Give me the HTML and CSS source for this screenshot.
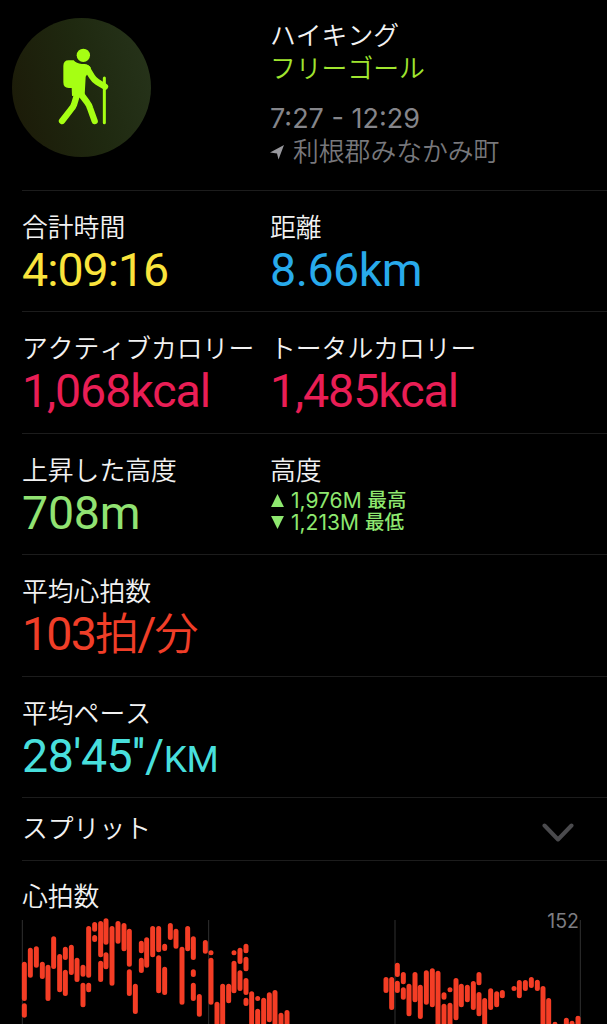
FILE: index.html
```html
<!DOCTYPE html>
<html lang="ja">
<head>
<meta charset="utf-8">
<title>ハイキング</title>
<link rel="stylesheet" href="styles.css">
</head>
<body>
<main class="workout">
  <header class="summary">
    <div class="badge">
      <svg class="hiker" viewBox="0 0 170 234" aria-hidden="true">
        <circle cx="82" cy="22" r="20"/>
        <path d="M38 37h15q8 10 24 11h8q13 1 20 12l-16 26-3 54-38 4-1-24H38q-16 0-16-17V54q0-17 16-17z"/>
        <path class="limb" d="M92 60L108 86Q114 96 124 102L147 116"/>
        <path class="limb" d="M66 130L54 170Q51 178 45 184L18 219M70 132L94 164Q99 170 102 180L116 219"/>
        <path class="pole" d="M145 90V224"/>
      </svg>
    </div>
    <div class="heading">
      <div class="title">ハイキング</div>
      <div class="goal">フリーゴール</div>
      <div class="time">7:27 - 12:29</div>
      <div class="place">
        <svg class="arrow" viewBox="0 0 14 16" aria-hidden="true"><path d="M14 1L8.5 15.5 7 9.5 0 8.5z"/></svg>
        <span>利根郡みなかみ町</span>
      </div>
    </div>
  </header>

  <section class="row">
    <div><div class="label">合計時間</div><div class="value duration yellow">4:09:16</div></div>
    <div><div class="label">距離</div><div class="value distance blue">8.66km</div></div>
  </section>
  <section class="row">
    <div><div class="label">アクティブカロリー</div><div class="value energy pink">1,068kcal</div></div>
    <div><div class="label">トータルカロリー</div><div class="value energy pink">1,485kcal</div></div>
  </section>
  <section class="row">
    <div><div class="label">上昇した高度</div><div class="value green">708m</div></div>
    <div>
      <div class="label">高度</div>
      <div class="range">
        <div class="extreme"><svg class="tri" viewBox="0 0 14 14"><path d="M7 1L13 13H1z"/></svg><span>1,976M</span><span class="kind">最高</span></div>
        <div class="extreme"><svg class="tri" viewBox="0 0 14 14"><path d="M1 1h12L7 13z"/></svg><span>1,213M</span><span class="kind">最低</span></div>
      </div>
    </div>
  </section>
  <section class="row">
    <div><div class="label">平均心拍数</div><div class="value rate red">103<span class="unit">拍</span>/<span class="unit">分</span></div></div>
  </section>
  <section class="row">
    <div><div class="label">平均ペース</div><div class="value pace cyan">28'45''/<span class="caps">KM</span></div></div>
  </section>
  <section class="splits">
    <div class="label">スプリット</div>
    <svg class="chevron" viewBox="0 0 32 20" aria-hidden="true"><path d="M2.5 2.5L16 16.5 29.5 2.5"/></svg>
  </section>
  <section class="heart">
    <div class="label">心拍数</div>
    <div class="chart">
      <svg class="plot" viewBox="0 0 1821 357" aria-hidden="true">
        <path class="grid" d="M67 45V357M626 45V357M1185 45V357M1741 45V357"/>
        <path class="bars" id="bars"/>
      </svg>
      <span class="max">152</span>
    </div>
  </section>
</main>
<script src="chart.js"></script>
</body>
</html>
```
FILE: styles.css
```css
body {
  margin: 0;
  background: #000;
  color: #f2f2f2;
  font-family: Inter, "Noto Sans CJK JP", sans-serif;
  font-weight: 350;
}
.workout {
  width: 607px;
  height: 1024px;
  overflow: hidden;
}
.summary {
  box-sizing: border-box;
  height: 190px;
  padding: 18px 0 0 12px;
  display: grid;
  grid-template-columns: 258px 1fr;
}
.badge {
  width: 139px;
  height: 139px;
  border-radius: 50%;
  background: linear-gradient(75deg, #1c1c09 10%, #1f2910 55%, #26331a 95%);
  display: flex;
}
.hiker {
  width: 56.7px;
  height: 78px;
  margin: 30px 0 0 43.5px;
  fill: #a6ff13;
  stroke: #a6ff13;
  stroke-width: 0;
  stroke-linecap: round;
  stroke-linejoin: round;
}
.limb {
  fill: none;
  stroke-width: 19;
}
.pole {
  stroke-width: 9;
}
.heading {
  padding-top: 1px;
  font-size: 25.8px;
  line-height: 33px;
  font-kerning: none;
}
.goal { color: #a0e52f; }
.time {
  margin-top: 17px;
  color: #85858a;
  font-size: 27px;
  font-weight: 400;
  font-kerning: auto;
}
.place {
  display: flex;
  align-items: center;
  gap: 9px;
  color: #77777b;
}
.arrow {
  width: 14px;
  height: 16px;
  fill: #98989d;
}
.row {
  box-sizing: border-box;
  height: 121.4px;
  margin-left: 22px;
  padding-top: 20px;
  border-top: 1px solid #1c1c1c;
  display: grid;
  grid-template-columns: 248px 1fr;
}
.label {
  font-size: 25.8px;
  line-height: 34px;
  font-kerning: none;
  white-space: nowrap;
}
.value {
  height: 51px;
  font-family: Roboto, "Noto Sans CJK JP", sans-serif;
  font-size: 46.5px;
  line-height: 51px;
  font-weight: 400;
  letter-spacing: -0.2px;
  white-space: nowrap;
}
.duration { letter-spacing: -1px; }
.distance { letter-spacing: -0.5px; }
.energy { letter-spacing: -1.1px; }
.rate { letter-spacing: -1.8px; }
.pace { letter-spacing: -0.5px; }
.yellow { color: #fae43c; }
.blue { color: #28aaeb; }
.pink { color: #e91e55; }
.green { color: #91e272; }
.red { color: #f03e28; }
.cyan { color: #48dfdc; }
.unit {
  font-weight: 350;
  font-size: 44px;
}
.caps {
  font-size: 37px;
}
.range {
  padding-top: 2px;
  color: #8ee86f;
  font-size: 21px;
  line-height: 21px;
  font-weight: 420;
}
.extreme {
  display: flex;
  align-items: center;
  height: 21.5px;
  white-space: nowrap;
}
.tri {
  width: 15px;
  height: 15px;
  margin-right: 6px;
  fill: currentColor;
}
.kind {
  margin-left: 6px;
  font-size: 19.5px;
  font-weight: 500;
}
.splits {
  box-sizing: border-box;
  height: 63.5px;
  margin-left: 22px;
  padding: 0 33px 0 0;
  border-top: 1px solid #1c1c1c;
  display: flex;
  align-items: center;
  justify-content: space-between;
}
.chevron {
  width: 32px;
  height: 20px;
  margin-top: 7px;
  fill: none;
  stroke: #4a4a4d;
  stroke-width: 4;
  stroke-linecap: round;
  stroke-linejoin: round;
}
.heart {
  margin-left: 22px;
  padding-top: 19px;
  border-top: 1px solid #1c1c1c;
}
.chart {
  position: relative;
  margin: -9px 0 0 -22px;
}
.plot {
  display: block;
  width: 607px;
  height: 119px;
}
.grid {
  stroke: #303030;
  stroke-width: 3;
}
.bars {
  fill: none;
  stroke: #f43d25;
  stroke-width: 15;
  stroke-linecap: round;
}
.max {
  position: absolute;
  top: 4px;
  right: 28px;
  color: #7d7d82;
  font-size: 19.5px;
  line-height: 24px;
  font-weight: 400;
}
```
FILE: chart.js
```javascript
// Each sample: x centre, then top/bottom pairs of its heart-rate spans.
const samples = [
  [73,170,288,295,338],[91,128,218],[109,124,188],[127,170,222],[144,179,288],[161,94,192],
  [179,147,262],[196,125,165,194,273],[214,119,210],[231,158,231],[249,179,215,233,307],
  [266,63,218,233,262],[284,51,80,90,111],[302,48,157,167,231],[318,40,119,142,193],
  [336,63,242],[354,48,116],[372,54,139],[388,71,185,193,273],[406,236,327],
  [424,107,145,158,204],[440,97,188],[458,63,157],[476,63,142,151,265],[494,116,138,185,270],
  [511,54,105],[528,71,131],[546,125,299],[563,63,139],[580,94,165,193,216,233,288],
  [598,267,335],[616,105,146],[633,136,151,158,299],[651,290,380],[668,236,380],[686,236,295],
  [702,136,151,167,265],[720,128,177,196,258],[738,116,145,155,199,219,270,278,303],
  [755,259,380],[773,273,288,311,380],[791,278,380],[808,262,352],[825,255,380],
  [843,323,380],[861,315,380],
  [1158,216,264],[1175,216,315],[1192,173,216,227,264],[1210,201,238,247,284],[1227,236,334],
  [1245,201,292],[1261,239,342],[1279,196,299],[1297,190,307],[1314,197,380],
  [1332,262,284,296,380],[1350,247,262,293,380],[1368,219,346],[1384,236,307],[1402,239,292],
  [1420,228,315],[1437,201,241,261,334],[1454,279,380],[1472,250,315],[1490,259,307],
  [1507,255,280],[1542,243,258],[1558,225,280],[1576,225,258],[1594,216,249],[1612,224,258],
  [1629,243,380],[1646,279,380],[1665,350,380],[1699,338,380],[1716,347,380],[1734,332,380]
];
let d = '';
for (const [x, ...spans] of samples) {
  for (let i = 0; i < spans.length; i += 2) {
    const top = spans[i] + 7.5;
    d += `M${x} ${top}V${Math.max(top + 0.1, spans[i + 1] - 7.5)}`;
  }
}
document.getElementById('bars').setAttribute('d', d);
```
